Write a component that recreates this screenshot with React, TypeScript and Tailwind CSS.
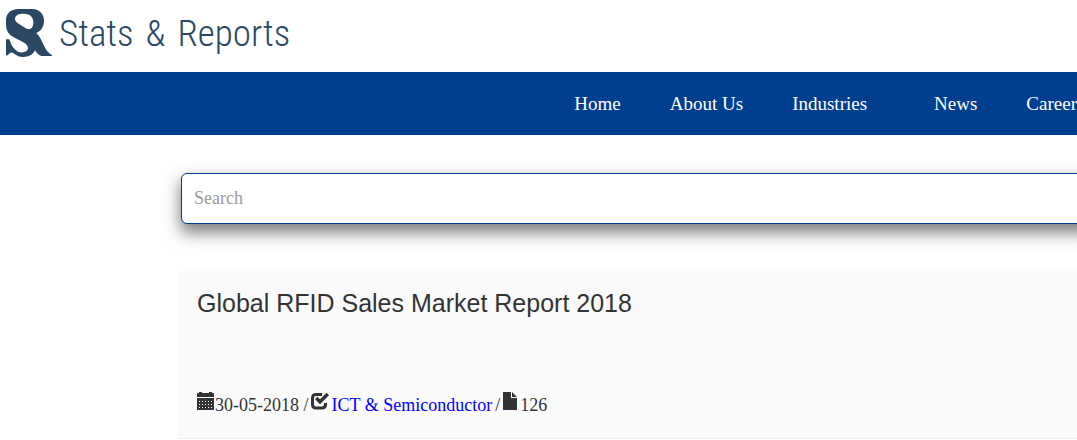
const navItems = [
  { label: 'Home', className: '' },
  { label: 'About Us', className: '' },
  { label: 'Industries', className: 'pr-[18px]' },
  { label: 'News', className: '' },
  { label: 'Career', className: '' },
];

function LogoMark() {
  return (
    <svg viewBox="18 27 138 144" className="h-12 w-[46px] shrink-0" fill="#2a4863" aria-hidden="true">
      <path
        fillRule="evenodd"
        d="M54 27H98C119 28 132 43 132 62C132 79 124 92 109 99C117 106 122 116 128 129C135 144 142 158 156 165V168H124C116 165 110 160 105 151C98 165 86 171 70 171C56 171 47 164 38 158C32 156 27 160 24 166H18V118H28C33 133 40 148 54 155C67 160 83 156 84 145C84 136 77 130 67 125L40 111C25 102 18 91 18 74V60C18 40 33 28 54 27ZM66 41C52 42 45 48 45 57C45 63 50 68 58 73L80 86C87 89 94 87 97 81C100 75 101 67 99 59C96 46 84 40 66 41Z"
      />
    </svg>
  );
}

function CalendarIcon() {
  return (
    <svg viewBox="0 0 18 18" className="h-[18px] w-[18px] shrink-0" fill="currentColor" aria-hidden="true">
      <path d="M0 2Q0 1 1 1H2V0H5V1H12V0H15V1H16Q17 1 17 2V5H0z" />
      <path
        fillRule="evenodd"
        d="M0 6h17v12H0zM2 9v1h1V9zM5 9v1h1V9zM8 9v1h1V9zM11 9v1h1V9zM14 9v1h1V9zM2 12v1h1v-1zM5 12v1h1v-1zM8 12v1h1v-1zM11 12v1h1v-1zM14 12v1h1v-1zM2 15v1h1v-1zM5 15v1h1v-1zM8 15v1h1v-1zM11 15v1h1v-1zM14 15v1h1v-1z"
      />
    </svg>
  );
}

function CheckIcon() {
  return (
    <svg viewBox="0 0 18 18" className="h-[18px] w-[18px] shrink-0" fill="none" stroke="currentColor" aria-hidden="true">
      <path d="M11 2.5H5Q1.5 2.5 1.5 6V12.5Q1.5 16 5 16H11Q14.5 16 14.5 12.5V11" strokeWidth="3" />
      <path d="M5.2 6L9 9.8L16.8 2" strokeWidth="3.4" />
    </svg>
  );
}

function FileIcon() {
  return (
    <svg viewBox="0 0 14 18" className="h-[18px] w-[14px] shrink-0" fill="currentColor" aria-hidden="true">
      <path d="M0 0H8V6H14V18H0ZM9 0L14 5H9Z" />
    </svg>
  );
}

export default function App() {
  return (
    <div className="overflow-hidden bg-white font-['Liberation_Serif',serif] text-[#333333]">
      <header className="flex h-[72px] items-start gap-[7px] px-1.5 pt-[9px]">
        <LogoMark />
        <span className="flex gap-3 whitespace-nowrap font-['Roboto_Condensed',sans-serif] text-[37px] font-light leading-[50px] text-[#2a4863]">
          <span>Stats</span>
          <span>&amp;</span>
          <span>Reports</span>
        </span>
      </header>

      <nav className="bg-[#003e8f]">
        <ul className="flex h-[63px] items-center justify-end gap-[49px] whitespace-nowrap text-[19px] leading-6 text-white">
          {navItems.map((item) => (
            <li key={item.label} className={item.className}>
              <a href="#">{item.label}</a>
            </li>
          ))}
        </ul>
      </nav>

      <main className="pl-[178px]">
        <form className="-mr-4 pl-[3px] pt-[38px]">
          <input
            type="search"
            aria-label="Search"
            placeholder="Search"
            className="block h-[51px] w-full rounded-md border border-[#003e8f] bg-white px-3 text-[18px] shadow-[0_8px_16px_1px_#7f7f7f] outline-none placeholder:text-[#999999]"
          />
        </form>

        <article className="mt-[47px] border-b border-[#eeeeee] bg-[#fafafa] px-[19px] pb-5 pt-4">
          <h1 className="font-['Liberation_Sans',sans-serif] text-[25px] leading-8">
            Global RFID Sales Market Report 2018
          </h1>
          <div className="mt-[73px] flex items-start whitespace-nowrap text-[18px] leading-[26px]">
            <CalendarIcon />
            <span>30-05-2018 /</span>
            <span className="flex gap-[3px] pl-[2px]">
              <CheckIcon />
              <a href="#" className="text-[#0000ff]">ICT &amp; Semiconductor</a>
            </span>
            <span className="px-[3px]">/</span>
            <span className="flex gap-[3px]">
              <FileIcon />
              <span>126</span>
            </span>
          </div>
        </article>
      </main>
    </div>
  );
}
